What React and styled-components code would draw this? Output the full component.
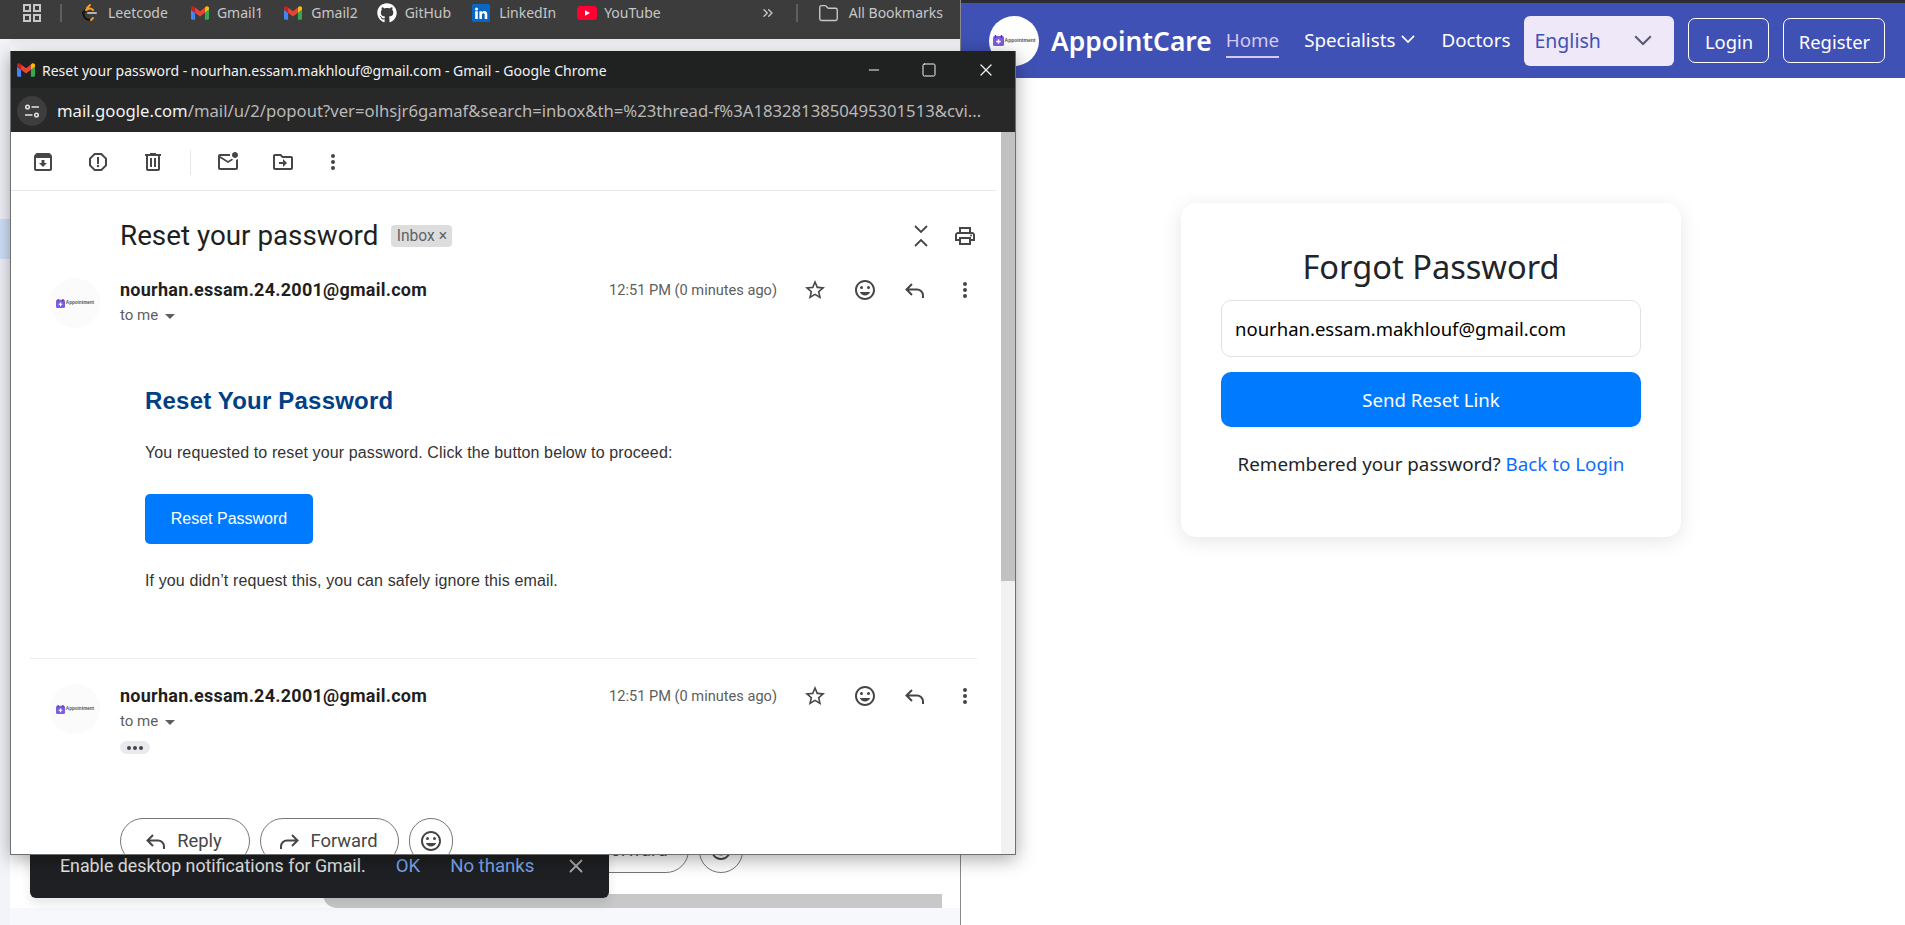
import styled, { createGlobalStyle } from "styled-components";
import { FaGithub } from "react-icons/fa";
import { ChevronsRight, Folder, Minus, Square, X } from "lucide-react";

const GlobalStyle = createGlobalStyle`
  html, body {
    margin: 0;
    padding: 0;
    background: #fff;
  }
  * {
    box-sizing: border-box;
  }
`;

const UI_FONT = `"Noto Sans", "Open Sans", sans-serif`;
const MAIL_FONT = `Roboto, "Liberation Sans", sans-serif`;
const ARIAL = `"Liberation Sans", Arial, sans-serif`;

const Screen = styled.div`
  position: relative;
  display: flex;
  width: 1905px;
  height: 925px;
  overflow: hidden;
`;

/* ---------- browser behind the popup ---------- */
const LeftBrowser = styled.div`
  width: 961px;
  display: flex;
  flex-direction: column;
  border-right: 1px solid #8a8a8a;
  background: #f6f8fc;
`;

const Bookmarks = styled.div`
  height: 39px;
  flex-shrink: 0;
  display: flex;
  align-items: flex-start;
  padding: 4px 0 0 23px;
  background: #3c3c3c;
  color: #c7c7c7;
  font: 14px/18px ${UI_FONT};
`;

const BookmarkItem = styled.div`
  display: flex;
  align-items: center;
  gap: ${(p) => p.$gap || 8}px;
  height: 18px;
  margin-left: ${(p) => p.$left || 0}px;
  white-space: nowrap;
`;

const BarDivider = styled.div`
  width: 2px;
  height: 18px;
  background: #5f5f5f;
  margin-left: ${(p) => p.$left}px;
`;

const GmailMain = styled.div`
  flex: 1;
  display: flex;
`;

const Sidebar = styled.div`
  width: 10px;
  padding-top: 180px;
  background: #f2f4fa;
`;

const ActiveStrip = styled.div`
  height: 40px;
  background: #d3e3fd;
`;

const Thread = styled.div`
  flex: 1;
  height: 869px;
  display: flex;
  flex-direction: column;
  justify-content: flex-end;
  background: linear-gradient(#e9eaef 0, #fff 11px);
`;

const ComposeBar = styled.div`
  height: 14px;
  margin: 21px 18px 0 313px;
  background: #c8c8c8;
  border-bottom-left-radius: 14px;
`;

const Snackbar = styled.div`
  position: absolute;
  z-index: 1;
  left: 30px;
  top: 838px;
  width: 579px;
  height: 60px;
  display: flex;
  padding-left: 30px;
  background: #1f2023;
  border-radius: 6px;
  box-shadow: 0 6px 10px rgba(60, 64, 67, 0.12);
  color: #e8e8e8;
  font: 17.8px/56px ${MAIL_FONT};
  white-space: nowrap;
`;

const SnackLink = styled.span`
  color: #7aa7f0;
  font-size: 18.6px;
  margin-left: ${(p) => p.$left}px;
`;

const SnackClose = styled.span`
  display: flex;
  align-items: center;
  height: 56px;
  margin-left: 31px;
  color: #a8a8a8;
`;

/* ---------- popup window ---------- */
const Popup = styled.div`
  position: absolute;
  z-index: 2;
  left: 10px;
  top: 51px;
  width: 1006px;
  height: 804px;
  display: flex;
  flex-direction: column;
  overflow: hidden;
  background: #fff;
  border: 1px solid #6f6f6f;
  border-top: 0;
  box-shadow: 0 4px 18px rgba(0, 0, 0, 0.35);
`;

const TitleBar = styled.div`
  height: 37px;
  flex-shrink: 0;
  display: flex;
  align-items: center;
  padding: 1px 0 0 6px;
  background: #202222;
  color: #f2f2f2;
  font: 14px/37px ${UI_FONT};
  white-space: nowrap;
`;

const TitleText = styled.span`
  margin-left: 7px;
  width: 571px;
`;

const WindowButtons = styled.div`
  display: flex;
  align-items: center;
  margin-left: auto;
  padding-right: 19px;
  gap: 39px;
  color: #f2f2f2;
`;

const AddressBar = styled.div`
  height: 44px;
  flex-shrink: 0;
  display: flex;
  align-items: center;
  padding: 1px 0 0 6px;
  background: #282828;
  color: #b9b9b9;
  font: 16.7px/44px ${UI_FONT};
  white-space: nowrap;
`;

const TuneButton = styled.div`
  width: 30px;
  height: 30px;
  border-radius: 50%;
  background: #3d3d3d;
  display: flex;
  align-items: center;
  justify-content: center;
  margin-right: 10px;
`;

const Host = styled.span`
  color: #f2f2f2;
`;

const Body = styled.div`
  flex: 1;
  min-height: 0;
  display: flex;
`;

const MailColumn = styled.div`
  flex: 1;
  min-width: 0;
  font-family: ${MAIL_FONT};
`;

const ScrollTrack = styled.div`
  width: 14px;
  background: #f1f1f1;
`;

const ScrollThumb = styled.div`
  height: 449px;
  background: #c1c1c1;
`;

const Toolbar = styled.div`
  height: 59px;
  display: flex;
  align-items: center;
  gap: 31px;
  padding: 2px 0 0 20px;
  margin-right: 5px;
  border-bottom: 1px solid #e8e8e8;
`;

const ToolDivider = styled.div`
  width: 1px;
  height: 25px;
  background: #e8e8e8;
  margin: 0 -6px;
`;

const ToolLast = styled.div`
  margin-left: -5px;
`;

const SubjectRow = styled.div`
  height: 87px;
  display: flex;
  align-items: center;
  padding: 3px 0 0 109px;
`;

const Subject = styled.h2`
  margin: 0;
  font: 400 27.8px/36px ${MAIL_FONT};
  color: #1f1f1f;
  white-space: nowrap;
`;

const InboxChip = styled.span`
  margin-left: 13px;
  width: 61px;
  height: 22px;
  text-align: center;
  border-radius: 4px;
  background: #dddddd;
  color: #5f6368;
  font: 15.6px/22px ${MAIL_FONT};
  white-space: nowrap;
`;

const SubjectActions = styled.div`
  display: flex;
  align-items: center;
  gap: 20px;
  margin-left: auto;
  padding-right: 24px;
`;

const MessageHead = styled.div`
  display: flex;
  padding: 0 24px 0 39px;
`;

const Avatar = styled.div`
  width: 50px;
  height: 50px;
  border-radius: 50%;
  background: ${(p) => p.$bg || "#fbfbfb"};
  display: flex;
  align-items: center;
  justify-content: center;
  gap: 1px;
  flex-shrink: 0;
`;

const LogoWord = styled.span`
  font: 700 ${(p) => p.$size || 4.6}px/1 ${ARIAL};
  color: #555;
`;

const MetaColumn = styled.div`
  margin-left: 20px;
`;

const Sender = styled.div`
  font: 700 18px/24px ${MAIL_FONT};
  letter-spacing: 0.25px;
  color: #1f1f1f;
  white-space: nowrap;
`;

const ToMe = styled.div`
  display: flex;
  align-items: center;
  gap: 7px;
  margin-top: 1px;
  font: 15px/24px ${MAIL_FONT};
  color: #5e5e5e;
`;

const Caret = styled.span`
  width: 0;
  height: 0;
  border-left: 5px solid transparent;
  border-right: 5px solid transparent;
  border-top: 5px solid #5e5e5e;
  margin-top: 2px;
`;

const MessageActions = styled.div`
  display: flex;
  align-items: center;
  height: 24px;
  margin-left: auto;
`;

const TimeLabel = styled.span`
  font: 14.6px/24px ${MAIL_FONT};
  color: #5e5e5e;
  margin-right: 26px;
  white-space: nowrap;
`;

const ActionIcons = styled.div`
  display: flex;
  align-items: center;
  gap: 26px;
`;

const EmailBody = styled.div`
  padding-left: 134px;
  font-family: ${ARIAL};
  color: #333;
`;

const EmailTitle = styled.h2`
  margin: 58px 0 0;
  font: 700 24px/30px ${ARIAL};
  letter-spacing: 0.2px;
  color: #004085;
`;

const EmailText = styled.p`
  margin: ${(p) => p.$top}px 0 0;
  font: 16px/24px ${ARIAL};
  letter-spacing: 0.12px;
`;

const ResetButton = styled.a`
  display: block;
  width: 168px;
  height: 50px;
  margin-top: 29px;
  border-radius: 5px;
  background: #007bff;
  color: #fff;
  font: 16px/50px ${ARIAL};
  text-align: center;
`;

const Rule = styled.div`
  height: 1px;
  margin: 65px 24px 25px 19px;
  background: #ececec;
`;

const Ellipsis = styled.div`
  width: 30px;
  height: 13px;
  margin: 7px 0 0 109px;
  border-radius: 7px;
  background: #e8eaed;
  display: flex;
  align-items: center;
  justify-content: center;
  gap: 2px;
`;

const Dot = styled.span`
  width: 4px;
  height: 4px;
  border-radius: 50%;
  background: #444;
`;

const ActionRow = styled.div`
  display: flex;
  gap: 10px;
  margin: ${(p) => p.$margin};
  font-family: ${MAIL_FONT};
`;

const PillButton = styled.div`
  width: ${(p) => p.$width}px;
  height: 46px;
  flex-shrink: 0;
  display: flex;
  align-items: center;
  justify-content: center;
  gap: 9px;
  padding-right: 4px;
  border: 1px solid #747775;
  border-radius: 23px;
  color: #444746;
  font: 400 18.4px/44px ${MAIL_FONT};
`;

const IconPill = styled(PillButton)`
  padding-right: 0;
`;

/* ---------- app page on the right ---------- */
const RightPage = styled.div`
  flex: 1;
  display: flex;
  flex-direction: column;
  min-width: 0;
  background: #fff;
`;

const TopStrip = styled.div`
  height: 3px;
  background: #2c2c34;
`;

const Navbar = styled.nav`
  height: 75px;
  display: flex;
  align-items: center;
  padding: 0 19px 0 28px;
  background: #3f51b5;
  color: #fff;
  font-family: ${UI_FONT};
`;

const Brand = styled.span`
  margin-left: 12px;
  font: 600 26.4px/40px ${UI_FONT};
  white-space: nowrap;
`;

const NavLink = styled.a`
  display: flex;
  align-items: center;
  gap: 6px;
  height: 34px;
  margin-left: ${(p) => p.$left}px;
  font-size: 18.8px;
  line-height: 26px;
  color: ${(p) => (p.$active ? "#d6c8f0" : "#fff")};
  border-bottom: 2px solid ${(p) => (p.$active ? "#d6c8f0" : "transparent")};
  white-space: nowrap;
`;

const LangSelect = styled.div`
  width: 150px;
  height: 50px;
  margin-left: 14px;
  display: flex;
  align-items: center;
  justify-content: space-between;
  padding: 0 22px 0 10px;
  border-radius: 6px;
  background: #eee8f8;
  color: #3f51b5;
  font-size: 19.5px;
`;

const OutlineButton = styled.button`
  width: ${(p) => p.$width}px;
  height: 45px;
  margin-left: ${(p) => p.$left}px;
  border: 1px solid #fff;
  border-radius: 7px;
  background: transparent;
  color: #fff;
  font: 18.4px/26px ${UI_FONT};
  padding: 3px 0 0;
`;

const PageMain = styled.main`
  flex: 1;
  display: flex;
  justify-content: center;
  align-items: flex-start;
  padding: 125px 4px 0 0;
`;

const Card = styled.div`
  width: 500px;
  height: 334px;
  padding: 40px;
  background: #fff;
  border-radius: 15px;
  box-shadow: 0 4px 20px rgba(0, 0, 0, 0.1);
  font-family: ${UI_FONT};
  text-align: center;
  color: #212529;
`;

const CardTitle = styled.h2`
  margin: 0 0 9px;
  font: 400 32.6px/48px ${UI_FONT};
`;

const EmailInput = styled.input`
  display: block;
  width: 100%;
  height: 57px;
  padding: 0 13px;
  border: 1px solid #dee2e6;
  border-radius: 10px;
  color: #000;
  font: 18.5px/26px ${UI_FONT};
  outline: none;
`;

const SubmitButton = styled.button`
  display: block;
  width: 100%;
  height: 55px;
  margin-top: 15px;
  border: 0;
  border-radius: 10px;
  background: #007bff;
  color: #fff;
  font: 18.6px/26px ${UI_FONT};
`;

const CardFooter = styled.p`
  margin: 24px 0 0;
  font: 18.8px/26px ${UI_FONT};
`;

const BackLink = styled.a`
  color: #0d6efd;
`;

/* ---------- icons ---------- */
const Svg = ({ size = 24, color = "#444746", children, viewBox = "0 0 24 24" }) => (
  <svg width={size} height={size} viewBox={viewBox} fill={color} style={{ flexShrink: 0, display: "block" }}>
    {children}
  </svg>
);

const ArchiveIcon = () => (
  <Svg>
    <path d="M20.54 5.23l-1.39-1.68C18.88 3.21 18.47 3 18 3H6c-.47 0-.88.21-1.16.55L3.46 5.23C3.17 5.57 3 6.02 3 6.5V19c0 1.1.9 2 2 2h14c1.1 0 2-.9 2-2V6.5c0-.48-.17-.93-.46-1.27zM5 19V8h14v11H5zm8.45-9h-2.9v3H8l4 4 4-4h-2.55z" />
  </Svg>
);
const ReportIcon = () => (
  <Svg>
    <path d="M15.73 3H8.27L3 8.27v7.46L8.27 21h7.46L21 15.73V8.27L15.73 3zM19 14.9L14.9 19H9.1L5 14.9V9.1L9.1 5h5.8L19 9.1v5.8z" />
    <circle cx="12" cy="16" r="1.2" />
    <path d="M11 7h2v7h-2z" />
  </Svg>
);
const TrashIcon = () => (
  <Svg>
    <path d="M15 4V3H9v1H4v2h1v13c0 1.1.9 2 2 2h10c1.1 0 2-.9 2-2V6h1V4h-5zm2 15H7V6h10v13zM9 8h2v9H9zm4 0h2v9h-2z" />
  </Svg>
);
const UnreadIcon = () => (
  <Svg>
    <path d="M22 8.98V18c0 1.1-.9 2-2 2H4c-1.1 0-2-.9-2-2V6c0-1.1.9-2 2-2h10.1c-.06.32-.1.66-.1 1s.04.68.1 1H4l8 5 3.67-2.29c.47.43 1.02.76 1.63.98L12 13 4 8v10h16V9.9c.74-.15 1.42-.48 2-.92zM16 5c0 1.66 1.34 3 3 3s3-1.34 3-3-1.34-3-3-3-3 1.34-3 3z" />
  </Svg>
);
const MoveIcon = () => (
  <Svg>
    <path d="M20 6h-8l-2-2H4c-1.1 0-2 .9-2 2v12c0 1.1.9 2 2 2h16c1.1 0 2-.9 2-2V8c0-1.1-.9-2-2-2zm0 12H4V6h5.17l2 2H20v10zm-8-4H8v-2h4V9l4 4-4 4v-3z" />
  </Svg>
);
const MoreIcon = () => (
  <Svg>
    <circle cx="12" cy="6" r="2" />
    <circle cx="12" cy="12" r="2" />
    <circle cx="12" cy="18" r="2" />
  </Svg>
);
const CollapseIcon = () => (
  <Svg>
    <path d="M6 2l6 6 6-6M6 22l6-6 6 6" fill="none" stroke="#444746" strokeWidth="1.8" />
  </Svg>
);
const PrintIcon = () => (
  <Svg>
    <path d="M19 8h-1V3H6v5H5c-1.66 0-3 1.34-3 3v6h4v4h12v-4h4v-6c0-1.66-1.34-3-3-3zM8 5h8v3H8V5zm8 14H8v-4h8v4zm2-4v-2H6v2H4v-4c0-.55.45-1 1-1h14c.55 0 1 .45 1 1v4h-2z" />
    <circle cx="18" cy="11.5" r="1" />
  </Svg>
);
const StarIcon = () => (
  <Svg>
    <path d="M22 9.24l-7.19-.62L12 2 9.19 8.63 2 9.24l5.46 4.73L5.82 21 12 17.27 18.18 21l-1.63-7.03L22 9.24zM12 15.4l-3.76 2.27 1-4.28-3.32-2.88 4.38-.38L12 6.1l1.71 4.04 4.38.38-3.32 2.88 1 4.28L12 15.4z" />
  </Svg>
);
const SmileIcon = () => (
  <Svg>
    <path d="M11.99 2C6.47 2 2 6.48 2 12s4.47 10 9.99 10C17.52 22 22 17.52 22 12S17.52 2 11.99 2zM12 20c-4.42 0-8-3.58-8-8s3.58-8 8-8 8 3.58 8 8-3.58 8-8 8z" />
    <circle cx="15.5" cy="9.5" r="1.5" />
    <circle cx="8.5" cy="9.5" r="1.5" />
    <path d="M12 17.5c2.33 0 4.31-1.46 5.11-3.5H6.89c.8 2.04 2.78 3.5 5.11 3.5z" />
  </Svg>
);
const ReplyIcon = () => (
  <Svg>
    <path d="M9 6l-5.5 5.5L9 17M4 11.5h10a6 6 0 0 1 6 6V20" fill="none" stroke="#444746" strokeWidth="2" />
  </Svg>
);
const ForwardIcon = () => (
  <Svg>
    <path d="M15 6l5.5 5.5L15 17M20 11.5H10a6 6 0 0 0-6 6V20" fill="none" stroke="#444746" strokeWidth="2" />
  </Svg>
);

const Chevron = ({ width, color }) => (
  <svg width={width} height={width * 0.6} viewBox="0 0 15 9" fill="none" stroke={color} strokeWidth="1.8" style={{ flexShrink: 0 }}>
    <path d="M1 1l6.5 6.5L14 1" />
  </svg>
);

const GmailLogo = ({ size = 18 }) => (
  <svg width={size} height={size} viewBox="0 3 24 18" style={{ flexShrink: 0 }}>
    <g transform="translate(0 3)">
      <path fill="#4285f4" d="M1.64 18h3.82V8.73L0 4.64v11.73C0 17.27.73 18 1.64 18z" />
      <path fill="#34a853" d="M18.55 18h3.81c.91 0 1.64-.73 1.64-1.64V4.64l-5.45 4.09z" />
      <path fill="#fbbc04" d="M18.55 1.64v7.09L24 4.64V2.45c0-2.02-2.31-3.17-3.93-1.96z" />
      <path fill="#ea4335" d="M5.45 8.73V1.64L12 6.55l6.55-4.91v7.09L12 13.64z" />
      <path fill="#c5221f" d="M0 2.45v2.19l5.45 4.09V1.64L3.93.49C2.31-.72 0 .43 0 2.45z" />
    </g>
  </svg>
);

const GridIcon = () => (
  <svg width="18" height="18" viewBox="0 0 18 18" fill="none" stroke="#c7c7c7" strokeWidth="2">
    <rect x="1" y="1" width="6" height="6" />
    <rect x="11" y="1" width="6" height="6" />
    <rect x="1" y="11" width="6" height="6" />
    <rect x="11" y="11" width="6" height="6" />
  </svg>
);

const LeetcodeIcon = () => (
  <svg width="18" height="18" viewBox="0 0 18 18" fill="none" strokeWidth="2" strokeLinecap="round">
    <path d="M10 1L3 9" stroke="#111" />
    <path d="M3 9l1 3c1 3 5 5 8 3" stroke="#111" />
    <path d="M10 1l-3 3M6 6l2-1c2-1 4 0 5 1" stroke="#f89f1b" />
    <path d="M13 14l-2 2" stroke="#f89f1b" />
    <path d="M8 9h8" stroke="#b3b3b3" />
  </svg>
);

const LinkedinIcon = () => (
  <svg width="18" height="18" viewBox="0 0 18 18">
    <rect width="18" height="18" rx="1.5" fill="#0a66c2" />
    <circle cx="4.5" cy="5" r="1.5" fill="#fff" />
    <path fill="#fff" d="M3.2 7.3h2.6V15H3.2zM7.4 7.3h2.5v1.1c.5-.8 1.4-1.3 2.5-1.3 2 0 2.9 1.3 2.9 3.4V15h-2.6v-4c0-1-.4-1.7-1.3-1.7-1 0-1.5.7-1.5 1.7v4H7.4z" />
  </svg>
);

const YoutubeIcon = () => (
  <svg width="20" height="14" viewBox="0 0 20 14">
    <rect width="20" height="14" rx="3.5" fill="#ff0033" />
    <path d="M8 4.2L13 7l-5 2.8z" fill="#fff" />
  </svg>
);

const TuneIcon = () => (
  <svg width="16" height="16" viewBox="0 0 16 16" fill="none" stroke="#e3e3e3" strokeWidth="1.5">
    <circle cx="3.5" cy="4" r="1.8" />
    <path d="M7.5 4H15M1 12h7.5" />
    <circle cx="12.5" cy="12" r="1.8" />
  </svg>
);

const CalendarLogo = ({ size = 9 }) => (
  <svg width={size} height={size} viewBox="0 0 12 12" style={{ flexShrink: 0 }}>
    <rect y="1" width="12" height="11" rx="2" fill="#7c5ce0" />
    <rect x="2" y="0" width="1.5" height="3" fill="#4a3a8a" />
    <rect x="8.5" y="0" width="1.5" height="3" fill="#4a3a8a" />
    <path d="M5.2 4.5h1.6v1.7h1.7v1.6H6.8v1.7H5.2V7.8H3.5V6.2h1.7z" fill="#fff" />
  </svg>
);

const Bookmark = ({ icon, label, left, gap }) => (
  <BookmarkItem $left={left} $gap={gap}>
    {icon}
    <span>{label}</span>
  </BookmarkItem>
);

const MessageHeader = () => (
  <MessageHead>
    <Avatar>
      <CalendarLogo />
      <LogoWord>Appointment</LogoWord>
    </Avatar>
    <MetaColumn>
      <Sender>nourhan.essam.24.2001@gmail.com</Sender>
      <ToMe>
        to me <Caret />
      </ToMe>
    </MetaColumn>
    <MessageActions>
      <TimeLabel>12:51 PM (0 minutes ago)</TimeLabel>
      <ActionIcons>
        <StarIcon />
        <SmileIcon />
        <ReplyIcon />
        <MoreIcon />
      </ActionIcons>
    </MessageActions>
  </MessageHead>
);

// the reply pill of the page behind sits fully under the snackbar, so it has no label
const ReplyButtons = ({ margin, covered }) => (
  <ActionRow $margin={margin}>
    <PillButton $width={130}>
      {!covered && <ReplyIcon />}
      {!covered && "Reply"}
    </PillButton>
    <PillButton $width={139}>
      <ForwardIcon />
      Forward
    </PillButton>
    <IconPill $width={44}>
      <SmileIcon />
    </IconPill>
  </ActionRow>
);

export default function App() {
  return (
    <>
      <GlobalStyle />
      <Screen>
        <LeftBrowser>
          <Bookmarks>
            <GridIcon />
            <BarDivider $left={19} />
            <Bookmark icon={<LeetcodeIcon />} label="Leetcode" left={18} gap={10} />
            <Bookmark icon={<GmailLogo />} label="Gmail1" left={23} />
            <Bookmark icon={<GmailLogo />} label="Gmail2" left={21} gap={9} />
            <Bookmark icon={<FaGithub size={20} color="#fff" />} label="GitHub" left={19} />
            <Bookmark icon={<LinkedinIcon />} label="LinkedIn" left={21} gap={9} />
            <Bookmark icon={<YoutubeIcon />} label="YouTube" left={21} gap={7} />
            <BookmarkItem $left={99}>
              <ChevronsRight size={16} color="#c7c7c7" />
            </BookmarkItem>
            <BarDivider $left={20} />
            <Bookmark icon={<Folder size={21} color="#c7c7c7" strokeWidth={1.6} />} label="All Bookmarks" left={20} gap={10} />
          </Bookmarks>
          <GmailMain>
            <Sidebar>
              <ActiveStrip />
            </Sidebar>
            <Thread>
              <ReplyButtons margin="0 0 0 400px" covered />
              <ComposeBar />
            </Thread>
          </GmailMain>
        </LeftBrowser>

        <Snackbar>
          Enable desktop notifications for Gmail.
          <SnackLink $left={30}>OK</SnackLink>
          <SnackLink $left={30}>No thanks</SnackLink>
          <SnackClose>
            <X size={22} />
          </SnackClose>
        </Snackbar>

        <Popup>
          <TitleBar>
            <GmailLogo />
            <TitleText>Reset your password - nourhan.essam.makhlouf@gmail.com - Gmail - Google Chrome</TitleText>
            <WindowButtons>
              <Minus size={16} strokeWidth={1.5} />
              <Square size={16} strokeWidth={1.5} />
              <X size={20} strokeWidth={1.5} />
            </WindowButtons>
          </TitleBar>
          <AddressBar>
            <TuneButton>
              <TuneIcon />
            </TuneButton>
            <Host>mail.google.com</Host>/mail/u/2/popout?ver=olhsjr6gamaf&amp;search=inbox&amp;th=%23thread-f%3A1832813850495301513&amp;cvi...
          </AddressBar>
          <Body>
            <MailColumn>
              <Toolbar>
                <ArchiveIcon />
                <ReportIcon />
                <TrashIcon />
                <ToolDivider />
                <UnreadIcon />
                <MoveIcon />
                <ToolLast>
                  <MoreIcon />
                </ToolLast>
              </Toolbar>
              <SubjectRow>
                <Subject>Reset your password</Subject>
                <InboxChip>Inbox ×</InboxChip>
                <SubjectActions>
                  <CollapseIcon />
                  <PrintIcon />
                </SubjectActions>
              </SubjectRow>

              <MessageHeader />
              <EmailBody>
                <EmailTitle>Reset Your Password</EmailTitle>
                <EmailText $top={25}>You requested to reset your password. Click the button below to proceed:</EmailText>
                <ResetButton>Reset Password</ResetButton>
                <EmailText $top={25}>If you didn’t request this, you can safely ignore this email.</EmailText>
              </EmailBody>
              <Rule />

              <MessageHeader />
              <Ellipsis>
                <Dot />
                <Dot />
                <Dot />
              </Ellipsis>
              <ReplyButtons margin="64px 0 0 109px" />
            </MailColumn>
            <ScrollTrack>
              <ScrollThumb />
            </ScrollTrack>
          </Body>
        </Popup>

        <RightPage>
          <TopStrip />
          <Navbar>
            <Avatar $bg="#fff">
              <CalendarLogo size={11} />
              <LogoWord $size={5}>Appointment</LogoWord>
            </Avatar>
            <Brand>AppointCare</Brand>
            <NavLink $left={14} $active>Home</NavLink>
            <NavLink $left={25}>
              Specialists <Chevron width={14} color="#fff" />
            </NavLink>
            <NavLink $left={26}>Doctors</NavLink>
            <LangSelect>
              English
              <Chevron width={18} color="#5a5a7a" />
            </LangSelect>
            <OutlineButton $width={81} $left={14}>Login</OutlineButton>
            <OutlineButton $width={102} $left={14}>Register</OutlineButton>
          </Navbar>
          <PageMain>
            <Card>
              <CardTitle>Forgot Password</CardTitle>
              <EmailInput readOnly value="nourhan.essam.makhlouf@gmail.com" />
              <SubmitButton>Send Reset Link</SubmitButton>
              <CardFooter>
                Remembered your password? <BackLink>Back to Login</BackLink>
              </CardFooter>
            </Card>
          </PageMain>
        </RightPage>
      </Screen>
    </>
  );
}
